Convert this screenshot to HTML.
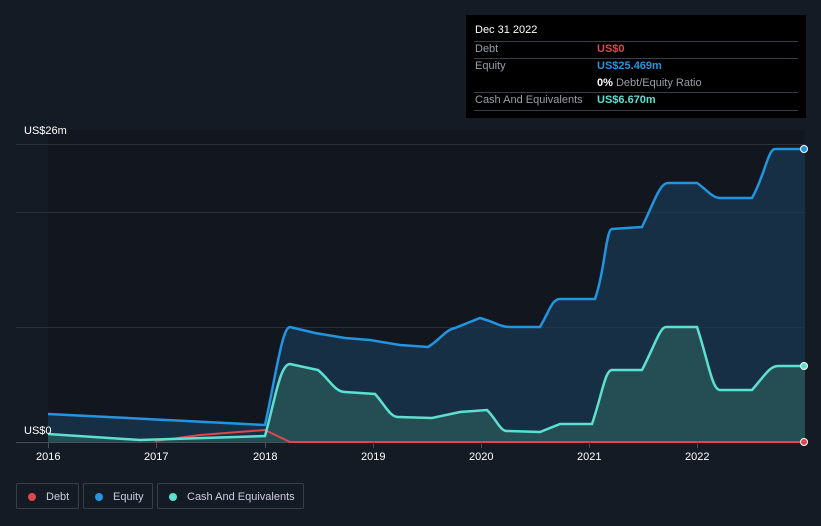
<!DOCTYPE html>
<html><head><meta charset="utf-8"><style>
body{margin:0;width:821px;height:526px;background:#151b24;font-family:"Liberation Sans",sans-serif;overflow:hidden;position:relative}
.tt{position:absolute;left:466px;top:15px;width:340px;height:103px;background:#000;color:#fff;font-size:11px}
.r{position:absolute;left:8px;right:8px;border-top:1px solid #3a3f47}
.l{position:absolute;left:9px;color:#9a9ea5}
.v{position:absolute;left:131px;font-weight:bold}
.ax{position:absolute;color:#fff;font-size:11px}
.lg{position:absolute;top:483px;height:26px;border:1px solid #3a3f47;border-radius:2px;color:#ccd;font-size:11px;line-height:26px;box-sizing:border-box}
.dot{display:inline-block;width:8px;height:8px;border-radius:50%;margin:0 10px 0 11px;vertical-align:-1px}
</style></head><body>
<svg width="821" height="526" style="position:absolute;left:0;top:0">
<rect x="48" y="130" width="757" height="312" fill="#12161e"/>
<g stroke="#2a2f38" stroke-width="1">
<line x1="16" y1="144.5" x2="805" y2="144.5"/><line x1="16" y1="212.5" x2="805" y2="212.5"/><line x1="16" y1="327.5" x2="805" y2="327.5"/>
</g>
<line x1="16" y1="442.5" x2="805" y2="442.5" stroke="#4a4f57"/>
<path d="M48,414 L265,425 C275,380 282,327 290,327 L315,333 345,338 370,340 400,345 428,347 C440,340 445,330 455,328 L480,318 C495,322 500,327 510,327 L540,327 C550,310 552,299 560,299 L595,299 C605,270 606,229 612,229 L642,227 C655,200 660,183 668,183 L697,183 C705,188 712,198 720,198 L752,198 C765,175 768,149 775,149 L805,149 L805,442 L48,442Z" fill="#1a3a56" opacity="0.7"/>
<path d="M48,434 L140,440 265,436 C275,400 280,364 290,364 L318,370 C330,380 335,392 345,392 L375,394 C385,405 390,417 398,417 L432,418 460,412 487,410 C497,420 500,431 507,431 L540,432 560,424 592,424 C602,395 605,370 612,370 L642,370 C655,345 660,327 666,327 L697,327 C708,360 712,390 720,390 L752,390 C765,375 770,366 778,366 L805,366 L805,442 L48,442Z" fill="#2a5a58" opacity="0.75"/>
<path d="M48,414 L265,425 C275,380 282,327 290,327 L315,333 345,338 370,340 400,345 428,347 C440,340 445,330 455,328 L480,318 C495,322 500,327 510,327 L540,327 C550,310 552,299 560,299 L595,299 C605,270 606,229 612,229 L642,227 C655,200 660,183 668,183 L697,183 C705,188 712,198 720,198 L752,198 C765,175 768,149 775,149 L805,149" fill="none" stroke="#2394e0" stroke-width="2.5"/>
<path d="M155,441 L200,435 265,430 L290,442 L805,442" fill="none" stroke="#e0474c" stroke-width="2"/>
<path d="M48,434 L140,440 265,436 C275,400 280,364 290,364 L318,370 C330,380 335,392 345,392 L375,394 C385,405 390,417 398,417 L432,418 460,412 487,410 C497,420 500,431 507,431 L540,432 560,424 592,424 C602,395 605,370 612,370 L642,370 C655,345 660,327 666,327 L697,327 C708,360 712,390 720,390 L752,390 C765,375 770,366 778,366 L805,366" fill="none" stroke="#5de0d0" stroke-width="2.5"/>
<circle cx="804" cy="149" r="3.5" fill="#2394e0" stroke="#fff"/>
<circle cx="804" cy="366" r="3.5" fill="#5de0d0" stroke="#fff"/>
<circle cx="804" cy="442" r="3.5" fill="#e0474c" stroke="#fff"/>
<g stroke="#4a4f57"><line x1="48.5" y1="442" x2="48.5" y2="448"/><line x1="156.5" y1="442" x2="156.5" y2="448"/><line x1="265.5" y1="442" x2="265.5" y2="448"/><line x1="373.5" y1="442" x2="373.5" y2="448"/><line x1="481.5" y1="442" x2="481.5" y2="448"/><line x1="589.5" y1="442" x2="589.5" y2="448"/><line x1="697.5" y1="442" x2="697.5" y2="448"/></g>
</svg>
<div class="ax" style="left:24px;top:125px">US$26m</div>
<div class="ax" style="left:24px;top:425px">US$0</div>
<div class="ax" style="left:36px;top:451px">2016</div>
<div class="ax" style="left:144px;top:451px">2017</div>
<div class="ax" style="left:253px;top:451px">2018</div>
<div class="ax" style="left:361px;top:451px">2019</div>
<div class="ax" style="left:469px;top:451px">2020</div>
<div class="ax" style="left:577px;top:451px">2021</div>
<div class="ax" style="left:685px;top:451px">2022</div>
<div class="tt">
<div style="position:absolute;left:9px;top:9px;color:#fff">Dec 31 2022</div>
<div class="r" style="top:26px"></div>
<div class="l" style="top:28px">Debt</div><div class="v" style="top:28px;color:#e0474c">US$0</div>
<div class="r" style="top:43px"></div>
<div class="l" style="top:45px">Equity</div><div class="v" style="top:45px;color:#2394e0">US$25.469m</div>
<div class="v" style="top:62px;color:#fff">0% <span style="color:#9a9ea5;font-weight:normal">Debt/Equity Ratio</span></div>
<div class="r" style="top:77px"></div>
<div class="l" style="top:79px">Cash And Equivalents</div><div class="v" style="top:79px;color:#5de0d0">US$6.670m</div>
<div class="r" style="top:95px"></div>
</div>
<div class="lg" style="left:16px;width:63px"><span class="dot" style="background:#e0474c"></span>Debt</div>
<div class="lg" style="left:83px;width:70px"><span class="dot" style="background:#2394e0"></span>Equity</div>
<div class="lg" style="left:157px;width:147px"><span class="dot" style="background:#5de0d0"></span>Cash And Equivalents</div>
</body></html>
